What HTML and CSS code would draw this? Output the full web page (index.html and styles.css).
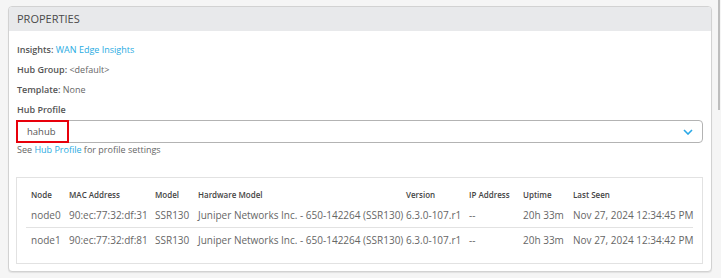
FILE: index.html
```html
<!DOCTYPE html>
<html>
<head>
<meta charset="utf-8">
<link rel="stylesheet" href="styles.css">
</head>
<body>
<div class="page">
  <div class="card">
    <div class="card-header">PROPERTIES</div>
    <div class="card-body">
      <div class="prop"><span class="label">Insights:</span> <a class="link">WAN Edge Insights</a></div>
      <div class="prop"><span class="label">Hub Group:</span> &lt;default&gt;</div>
      <div class="prop"><span class="label">Template:</span> None</div>
      <div class="prop"><span class="label">Hub Profile</span></div>
      <div class="select">
        <span class="select-value">hahub</span>
        <svg class="chevron" width="10" height="6" viewBox="0 0 10 6"><path d="M1 1 L5 5 L9 1" fill="none" stroke="#2aa8e6" stroke-width="1.6"/></svg>
        <span class="highlight"></span>
      </div>
      <div class="hint">See <a class="link">Hub Profile</a> for profile settings</div>
      <div class="table-box">
        <table class="nodes">
          <colgroup>
            <col style="width:38px"><col style="width:86px"><col style="width:43px"><col style="width:208px"><col style="width:63px"><col style="width:54px"><col style="width:50px"><col>
          </colgroup>
          <thead>
            <tr><th>Node</th><th>MAC Address</th><th>Model</th><th>Hardware Model</th><th>Version</th><th>IP Address</th><th>Uptime</th><th>Last Seen</th></tr>
          </thead>
          <tbody>
            <tr class="sep"><td>node0</td><td>90:ec:77:32:df:31</td><td>SSR130</td><td>Juniper Networks Inc. - 650-142264 (SSR130)</td><td>6.3.0-107.r1</td><td>--</td><td>20h 33m</td><td>Nov 27, 2024 12:34:45 PM</td></tr>
            <tr><td>node1</td><td>90:ec:77:32:df:81</td><td>SSR130</td><td>Juniper Networks Inc. - 650-142264 (SSR130)</td><td>6.3.0-107.r1</td><td>--</td><td>20h 33m</td><td>Nov 27, 2024 12:34:42 PM</td></tr>
          </tbody>
        </table>
      </div>
    </div>
  </div>
  <div class="scrollbar"></div>
</div>
</body>
</html>
```
FILE: styles.css
```css
html, body {
  margin: 0;
  padding: 0;
  background: #f5f5f5;
  font-family: "Open Sans", "Liberation Sans", sans-serif;
  color: #555;
}
.page {
  position: relative;
  width: 721px;
  height: 278px;
  padding: 6px 9px 0 8px;
  box-sizing: border-box;
}
.scrollbar {
  position: absolute;
  right: 1px;
  top: 0;
  width: 2px;
  height: 110px;
  background: #bdbdbd;
}
.card {
  background: #fff;
  border: 1px solid #d2d2d2;
  border-radius: 4px;
  box-shadow: 0 1px 1px rgba(0,0,0,0.08);
  height: 266px;
  box-sizing: border-box;
  overflow: hidden;
}
.card-header {
  background: #e8e9eb;
  height: 24px;
  line-height: 24px;
  padding-left: 8px;
  font-size: 11px;
  color: #4a4a4a;
}
.card-body {
  padding: 9px 8px 0 7px;
}
.prop {
  font-size: 9px;
  line-height: 20px;
  height: 20px;
  color: #666;
  padding-left: 1px;
}
.label {
  font-weight: 600;
  color: #555;
}
.link {
  color: #29abe2;
  text-decoration: none;
}
.select {
  position: relative;
  height: 23px;
  border: 1px solid #b3b3b3;
  border-radius: 4px;
  box-sizing: border-box;
  display: flex;
  align-items: center;
  justify-content: space-between;
  padding: 0 9px 0 10px;
}
.select-value {
  font-size: 9.5px;
  color: #555;
}
.highlight {
  position: absolute;
  left: -1px;
  top: -1px;
  width: 53px;
  height: 23px;
  border: 2px solid #e8000b;
  box-sizing: border-box;
}
.hint {
  font-size: 9px;
  color: #666;
  line-height: 14px;
  padding-left: 1px;
}
.table-box {
  margin-top: 20px;
  border: 1px solid #e2e2e2;
  height: 87px;
  box-sizing: border-box;
  padding: 7px 9px 0 9px;
}
.nodes {
  border-collapse: collapse;
  table-layout: fixed;
  width: 100%;
}
.nodes th {
  font-size: 8px;
  font-weight: 600;
  color: #444;
  text-align: left;
  height: 18px;
  padding: 0 0 0 5px;
  white-space: nowrap;
}
.nodes td {
  font-size: 10px;
  color: #666;
  height: 24px;
  padding: 0 0 0 5px;
  white-space: nowrap;
}
.nodes tr.sep td {
  border-bottom: 1px solid #e2e2e2;
}
```
